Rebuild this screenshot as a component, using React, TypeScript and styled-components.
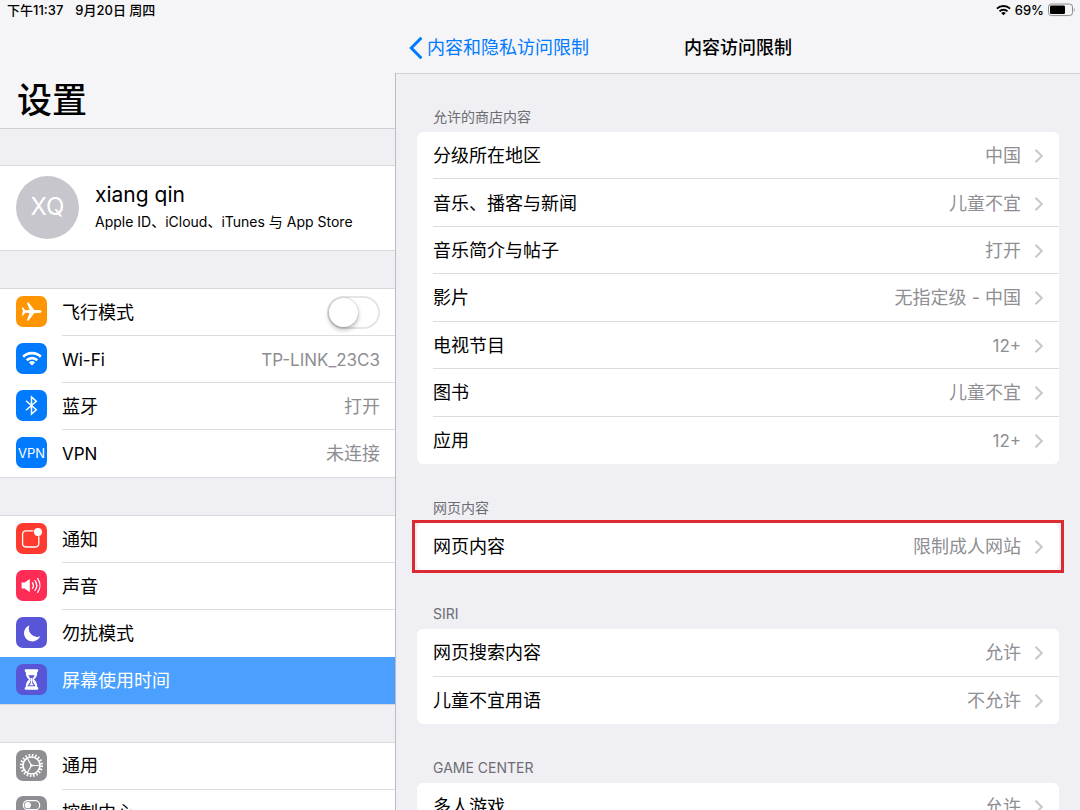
import React from "react";
import styled, { createGlobalStyle } from "styled-components";

const GlobalStyle = createGlobalStyle`
  * { box-sizing: border-box; }
  body {
    margin: 0;
    background: #efeff4;
    color: #000;
    font-family: Inter, "Noto Sans CJK SC", sans-serif;
    font-size: 18px;
    line-height: 24px;
  }
  button, a { font: inherit; color: inherit; }
`;

const Page = styled.div`
  display: grid;
  grid-template-columns: minmax(0, 11fr) minmax(0, 19fr);
  height: 100vh;
  overflow: hidden;
`;

const Pane = styled.div`
  display: flex;
  flex-direction: column;
  min-height: 0;
`;

const Header = styled.header<{ $height: number }>`
  flex: none;
  display: flex;
  flex-direction: column;
  height: ${(p) => p.$height}px;
  background: #f5f5f7;
  box-shadow: 0 1px 0 #cfcfd4;
  z-index: 1;
`;

const Scroller = styled.div`
  flex: 1;
  min-height: 0;
  overflow-y: auto;
  scrollbar-width: none;
`;

const SideScroller = styled(Scroller)`
  padding-top: 37px;
`;

const SidePane = styled(Pane)`
  position: relative;

  /* The divider starts below the detail pane's header. */
  &::after {
    content: "";
    position: absolute;
    inset: 73px 0 0 auto;
    width: 1px;
    background: #bcbbc1;
    z-index: 2;
  }
`;

const StatusBar = styled.div<{ $end?: boolean }>`
  display: flex;
  align-items: center;
  justify-content: ${(p) => (p.$end ? "flex-end" : "flex-start")};
  gap: ${(p) => (p.$end ? 4 : 12)}px;
  height: 20px;
  padding: 0 5px 0 7px;
  font-size: 13px;
  font-weight: 500;
  line-height: 20px;
`;

const PageTitle = styled.h1`
  margin: auto 0 0;
  padding: 0 17px 4px;
  font-size: 35px;
  line-height: 48px;
  font-weight: 500;
`;

const NavBar = styled.nav`
  flex: 1;
  display: grid;
  grid-template-columns: 1fr auto 1fr;
  align-items: center;
  padding: 3px 13px 0;
`;

const BackLink = styled.a`
  display: flex;
  align-items: center;
  gap: 4px;
  color: #007aff;
  text-decoration: none;
`;

const NavTitle = styled.h2`
  margin: 0;
  font-size: 18px;
  font-weight: 500;
`;

const Profile = styled.button`
  display: flex;
  align-items: center;
  gap: 16px;
  width: 100%;
  height: 86px;
  margin: 0 0 37px;
  padding: 0 16px 2px;
  border: 0;
  border-top: 1px solid #d9d9dd;
  border-bottom: 1px solid #d9d9dd;
  background: #fff;
  text-align: left;
`;

const Avatar = styled.span`
  flex: none;
  display: grid;
  place-items: center;
  width: 63px;
  height: 63px;
  border-radius: 50%;
  background: #c7c6cd;
  color: #fff;
  font-size: 24px;
`;

const ProfileName = styled.span`
  display: block;
  font-size: 21px;
  line-height: 30px;
`;

const ProfileDetail = styled.span`
  display: block;
  font-size: 14px;
  line-height: 24px;
`;

/* Rows share the list's height equally. */
const List = styled.ul<{ $height: number }>`
  display: grid;
  grid-auto-rows: 1fr;
  height: ${(p) => p.$height}px;
  margin: 0;
  padding: 0;
  list-style: none;
  background: #fff;
`;

const SideList = styled(List)`
  margin-bottom: 37px;
  border-top: 1px solid #d9d9dd;
  border-bottom: 1px solid #d9d9dd;
`;

const CardList = styled(List)`
  border-radius: 6px;
`;

const SideItem = styled.li<{ $selected?: boolean }>`
  display: grid;
  background: ${(p) => (p.$selected ? "#4a9fff" : "transparent")};
  color: ${(p) => (p.$selected ? "#fff" : "#000")};
`;

const SideRow = styled.div`
  display: flex;
  align-items: center;
  gap: 15px;
  min-width: 0;
  padding: 0 0 0 16px;
  border: 0;
  background: none;
  text-align: left;
`;

const RowBody = styled.span<{ $line?: boolean }>`
  flex: 1;
  align-self: stretch;
  display: flex;
  align-items: center;
  justify-content: space-between;
  padding: 1px 16px 0 0;
  border-bottom: 1px solid ${(p) => (p.$line ? "#dcdcdf" : "transparent")};
`;

const Text = styled.span<{ $latin?: boolean }>`
  font-size: ${(p) => (p.$latin ? 17 : 18)}px;
`;

const Value = styled(Text)`
  color: #8e8e93;
`;

const Tile = styled.span<{ $color: string }>`
  flex: none;
  display: grid;
  place-items: center;
  width: 31px;
  height: 31px;
  margin-bottom: 2px;
  border-radius: 7px;
  background: ${(p) => p.$color};
  color: #fff;
  font-size: 13px;

  svg { display: block; }
`;

const Switch = styled.input`
  appearance: none;
  display: flex;
  width: 53px;
  height: 33px;
  margin: 0;
  border: 2px solid #e5e5e6;
  border-radius: 17px;
  background: #fff;

  &::before {
    content: "";
    width: 29px;
    height: 29px;
    border-radius: 50%;
    background: #fff;
    box-shadow: 0 3px 5px rgba(0, 0, 0, 0.25), 0 0 2px rgba(0, 0, 0, 0.25);
  }

  &:checked {
    justify-content: flex-end;
    border-color: #4cd964;
    background: #4cd964;
  }
`;

const Section = styled.section`
  padding: 0 21px;
`;

const SectionTitle = styled.h3`
  display: flex;
  align-items: flex-end;
  height: 59px;
  margin: 0;
  padding: 0 16px 5px;
  color: #6d6d72;
  font-size: 14px;
  line-height: 20px;
  font-weight: 400;
`;

const CardItem = styled.li<{ $marked?: boolean }>`
  position: relative;
  display: grid;
  padding-left: 16px;

  &::after {
    content: "";
    display: ${(p) => (p.$marked ? "block" : "none")};
    position: absolute;
    inset: -3px -5px;
    border: 3px solid #dc2a33;
    pointer-events: none;
  }
`;

const CardRow = styled.button<{ $line: boolean }>`
  display: flex;
  align-items: center;
  gap: 13px;
  padding: 2px 15px 0 0;
  border: 0;
  border-bottom: 1px solid ${(p) => (p.$line ? "#dcdcdf" : "transparent")};
  background: none;
  text-align: left;
`;

const CardLabel = styled.span`
  flex: 1;
`;

const Chevron = () => (
  <svg width="10" height="16" viewBox="0 0 10 16" fill="none" stroke="#c7c7cc" strokeWidth="2" aria-hidden="true">
    <path d="M1.5 1.7 7.8 8 1.5 14.3" />
  </svg>
);

const BackChevron = () => (
  <svg width="14" height="24" viewBox="0 0 14 24" fill="none" stroke="currentColor" strokeWidth="3" aria-hidden="true">
    <path d="M12.4 1.7 2.3 12l10.1 10.3" />
  </svg>
);

const WifiGlyph = ({ width, height }: { width: number; height: number }) => (
  <svg width={width} height={height} viewBox="0 0 20 15" fill="none" stroke="currentColor" strokeWidth="2.6" aria-hidden="true">
    <path d="M1.2 5.7a12.6 12.6 0 0 1 17.6 0" />
    <path d="M4.7 9.3a7.6 7.6 0 0 1 10.6 0" />
    <path d="M10 14.6 6.9 11.5a4.5 4.5 0 0 1 6.2 0z" fill="currentColor" stroke="none" />
  </svg>
);

const Battery = () => (
  <svg width="27" height="14" viewBox="0 0 27 14" aria-hidden="true">
    <rect x="0.5" y="1" width="24" height="11.6" rx="3" fill="none" stroke="#8c8c90" />
    <rect x="2" y="2.5" width="15" height="8.6" rx="1.4" />
    <path d="M25.8 4.9c1.2.5 1.2 3.3 0 3.8z" fill="#8c8c90" />
  </svg>
);

const PlaneIcon = () => (
  <svg width="21" height="19" viewBox="0 0 21 19" fill="#fff">
    <path d="M20.6 9.5c0-.9-1.2-1.5-2.6-1.5h-4.600L7.600.5H5.800L8.600 8 4.200 8.200 2.200 5.600H.8l1.100 3.900-1.100 3.900h1.400l2-2.600 4.400.2-2.800 7.500h1.800l5.800-7.500H18c1.400 0 2.600-.6 2.600-1.500z" />
  </svg>
);

const BluetoothIcon = () => (
  <svg width="13" height="21" viewBox="0 0 13 21" fill="none" stroke="#fff" strokeWidth="1.5">
    <path d="M1 5.800 11.300 14.800 6.500 19V2l4.800 4.200L1 15.200" />
  </svg>
);

const NotificationIcon = () => (
  <svg width="31" height="31" viewBox="0 0 31 31" fill="none">
    <path d="M17.500 7.800H10a3.400 3.400 0 0 0-3.400 3.400v9.400A3.400 3.400 0 0 0 10 24h9.400a3.400 3.400 0 0 0 3.400-3.400v-7.400" stroke="#fff" strokeWidth="1.300" />
    <circle cx="22" cy="9" r="4" fill="#fff" />
  </svg>
);

const SoundIcon = () => (
  <svg width="21" height="17" viewBox="0 0 21 17" fill="none" stroke="#fff" strokeWidth="1.300" strokeLinecap="round">
    <path d="M.6 5.600h3L8.800 2v13l-5.200-3.600h-3z" fill="#fff" stroke="none" />
    <path d="M11.400 5.600a5 5 0 0 1 0 5.800M14 3.600a8.400 8.400 0 0 1 0 9.800M16.700 1.600a12 12 0 0 1 0 13.800" />
  </svg>
);

const MoonIcon = () => (
  <svg width="18" height="18" viewBox="0 0 18 18" fill="#fff">
    <path d="M6.600 1.200a8.400 8.400 0 1 0 10.600 11.100A8.300 8.300 0 0 1 6.600 1.200z" />
  </svg>
);

const HourglassIcon = () => (
  <svg width="15" height="21" viewBox="0 0 15 21">
    <path d="M2 .3h11c.9 0 1.300.5 1.300 1.200S13.900 2.800 13.200 2.900c0 3.600-.9 5.600-3.200 7.600 2.300 2 3.200 4 3.200 7.600.7.1 1.100.6 1.100 1.300s-.4 1.300-1.300 1.300H2c-.9 0-1.300-.6-1.300-1.300s.4-1.200 1.100-1.300c0-3.600.9-5.600 3.200-7.600-2.300-2-3.200-4-3.200-7.600C1.100 2.800.7 2.300.7 1.500S1.100.3 2 .3z" fill="#fff" />
    <path d="M4.300 6.200h6.400c-.5 1.300-1.300 2.200-2.300 3.200v2.200c0 2 2.300 3.200 3 5.600H3.600c.7-2.400 3-3.600 3-5.600V9.400C5.600 8.400 4.800 7.500 4.300 6.200z" fill="#5856d6" />
    <path d="M6.900 9h1.200v5.200l1.800 2H5.100l1.800-2z" fill="#fff" />
  </svg>
);

const GearIcon = () => (
  <svg width="25" height="25" viewBox="0 0 25 25" fill="none" stroke="#fff">
    <circle cx="12.500" cy="12.500" r="10.300" strokeWidth="2.600" strokeDasharray="1.550 1.686" />
    <circle cx="12.500" cy="12.500" r="8.500" strokeWidth="1.700" />
    <path d="M12.500 12.500H21M12.500 12.500 8.300 5.200M12.500 12.500 8.300 19.800" strokeWidth="1.200" />
    <circle cx="12.500" cy="12.500" r="1.300" fill="#fff" stroke="none" />
  </svg>
);

const ControlIcon = () => (
  <svg width="31" height="31" viewBox="0 0 31 31" fill="none" stroke="#fff" strokeWidth="1.200">
    <rect x="7.300" y="4.700" width="16.400" height="9" rx="4.500" />
    <circle cx="11.800" cy="9.200" r="3.100" fill="#fff" stroke="none" />
    <rect x="7.300" y="17.300" width="16.400" height="9" rx="4.500" fill="#fff" />
    <circle cx="19.200" cy="21.800" r="3.100" fill="#8e8e93" stroke="none" />
  </svg>
);

const isLatin = (text: string) => /^[\x20-\x7e]+$/.test(text);

type SideEntry = {
  label: string;
  color: string;
  icon: React.ReactNode;
  value?: string;
  toggle?: boolean;
  selected?: boolean;
};

const sideGroups: { height: number; rows: SideEntry[] }[] = [
  {
    height: 190,
    rows: [
      { label: "飞行模式", color: "#ff9500", icon: <PlaneIcon />, toggle: true },
      { label: "Wi-Fi", color: "#007aff", icon: <WifiGlyph width={20} height={15} />, value: "TP-LINK_23C3" },
      { label: "蓝牙", color: "#007aff", icon: <BluetoothIcon />, value: "打开" },
      { label: "VPN", color: "#007aff", icon: "VPN", value: "未连接" },
    ],
  },
  {
    height: 190,
    rows: [
      { label: "通知", color: "#ff3b30", icon: <NotificationIcon /> },
      { label: "声音", color: "#ff2d55", icon: <SoundIcon /> },
      { label: "勿扰模式", color: "#5856d6", icon: <MoonIcon /> },
      { label: "屏幕使用时间", color: "#5856d6", icon: <HourglassIcon />, selected: true },
    ],
  },
  {
    height: 95,
    rows: [
      { label: "通用", color: "#8e8e93", icon: <GearIcon /> },
      { label: "控制中心", color: "#8e8e93", icon: <ControlIcon /> },
    ],
  },
];

const sections: { title: string; height: number; marked?: boolean; rows: [string, string][] }[] = [
  {
    title: "允许的商店内容",
    height: 332,
    rows: [
      ["分级所在地区", "中国"],
      ["音乐、播客与新闻", "儿童不宜"],
      ["音乐简介与帖子", "打开"],
      ["影片", "无指定级 - 中国"],
      ["电视节目", "12+"],
      ["图书", "儿童不宜"],
      ["应用", "12+"],
    ],
  },
  { title: "网页内容", height: 47, marked: true, rows: [["网页内容", "限制成人网站"]] },
  {
    title: "SIRI",
    height: 95,
    rows: [
      ["网页搜索内容", "允许"],
      ["儿童不宜用语", "不允许"],
    ],
  },
  { title: "GAME CENTER", height: 47, rows: [["多人游戏", "允许"]] },
];

const SideEntryRow = ({ entry, line }: { entry: SideEntry; line: boolean }) => (
  <SideItem $selected={entry.selected}>
    <SideRow as={entry.toggle ? "label" : "button"}>
      <Tile $color={entry.color} aria-hidden="true">{entry.icon}</Tile>
      <RowBody $line={line}>
        <Text $latin={isLatin(entry.label)}>{entry.label}</Text>
        {entry.value && <Value $latin={isLatin(entry.value)}>{entry.value}</Value>}
        {entry.toggle && <Switch type="checkbox" role="switch" />}
      </RowBody>
    </SideRow>
  </SideItem>
);

export default function App() {
  return (
    <>
      <GlobalStyle />
      <Page>
        <SidePane as="aside">
          <Header $height={128}>
            <StatusBar>
              <span>下午11:37</span>
              <span>9月20日 周四</span>
            </StatusBar>
            <PageTitle>设置</PageTitle>
          </Header>
          <SideScroller>
            <Profile>
              <Avatar>XQ</Avatar>
              <span>
                <ProfileName>xiang qin</ProfileName>
                <ProfileDetail>Apple ID、iCloud、iTunes 与 App Store</ProfileDetail>
              </span>
            </Profile>
            {sideGroups.map((group, g) => (
              <SideList key={g} $height={group.height}>
                {group.rows.map((entry, i) => (
                  <SideEntryRow
                    key={entry.label}
                    entry={entry}
                    line={i < group.rows.length - 1 && !group.rows[i + 1].selected}
                  />
                ))}
              </SideList>
            ))}
          </SideScroller>
        </SidePane>

        <Pane as="main">
          <Header $height={73}>
            <StatusBar $end>
              <WifiGlyph width={15} height={12} />
              <span>69%</span>
              <Battery />
            </StatusBar>
            <NavBar>
              <BackLink href="#">
                <BackChevron />
                内容和隐私访问限制
              </BackLink>
              <NavTitle>内容访问限制</NavTitle>
            </NavBar>
          </Header>
          <Scroller>
            {sections.map((section) => (
              <Section key={section.title}>
                <SectionTitle>{section.title}</SectionTitle>
                <CardList $height={section.height}>
                  {section.rows.map(([label, value], i) => (
                    <CardItem key={label} $marked={section.marked}>
                      <CardRow $line={i < section.rows.length - 1}>
                        <CardLabel>{label}</CardLabel>
                        <Value $latin={isLatin(value)}>{value}</Value>
                        <Chevron />
                      </CardRow>
                    </CardItem>
                  ))}
                </CardList>
              </Section>
            ))}
          </Scroller>
        </Pane>
      </Page>
    </>
  );
}
